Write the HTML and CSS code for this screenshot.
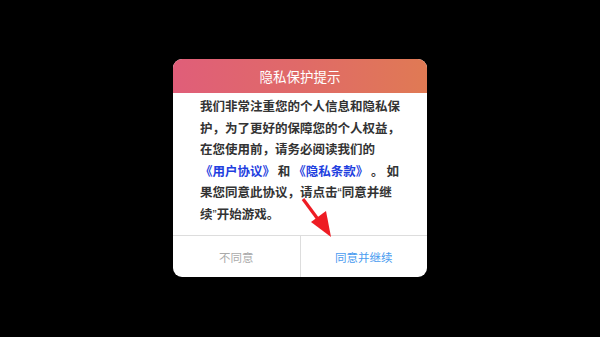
FILE: index.html
```html
<!DOCTYPE html>
<html lang="zh">
<head>
<meta charset="utf-8">
<link rel="stylesheet" href="styles.css">
</head>
<body>
<div class="stage">
  <div class="dialog">
    <div class="header">隐私保护提示</div>
    <div class="content">
      <p class="text">我们非常注重您的个人信息和隐私保<br>护，为了更好的保障您的个人权益，<br>在您使用前，请务必阅读我们的<br><span class="link">《用户协议》</span> 和 <span class="link">《隐私条款》</span> 。 如<br>果您同意此协议，请点击<span class="q">“</span>同意并继<br>续<span class="q">”</span>开始游戏。</p>
    </div>
    <div class="actions">
      <div class="btn btn-no">不同意</div>
      <div class="btn btn-yes">同意并继续</div>
    </div>
  </div>
  <svg class="arrow" width="600" height="337" viewBox="0 0 600 337">
    <line x1="303" y1="199" x2="320" y2="222" stroke="#ee1c24" stroke-width="3.2"/>
    <polygon points="311,222 326,211 331,237" fill="#ee1c24"/>
  </svg>
</div>
</body>
</html>
```
FILE: styles.css
```css
html, body {
  margin: 0;
  padding: 0;
  background: #000;
}
.stage {
  position: relative;
  width: 600px;
  height: 337px;
  display: flex;
  justify-content: center;
  align-items: flex-start;
  font-family: "Noto Sans CJK SC", "Noto Sans", sans-serif;
}
.dialog {
  margin-top: 59px;
  width: 254px;
  background: #fff;
  border-radius: 9px;
  overflow: hidden;
  display: flex;
  flex-direction: column;
}
.header {
  height: 34px;
  background: linear-gradient(90deg, #e05e79 0%, #e06a68 50%, #e07a54 100%);
  color: #fff;
  font-size: 13.5px;
  display: flex;
  align-items: center;
  justify-content: center;
}
.content {
  padding: 2px 0 11px 27px;
}
.text {
  margin: 0;
  font-size: 12.5px;
  line-height: 21.5px;
  font-weight: 700;
  color: #333;
  white-space: nowrap;
}
.q {
  font-family: "Liberation Sans", sans-serif;
  font-weight: 400;
  line-height: 0;
}
.link {
  color: #1f3fe0;
}
.actions {
  display: flex;
  border-top: 1px solid #ddd;
  height: 41px;
}
.btn {
  flex: 1;
  display: flex;
  align-items: center;
  justify-content: center;
  font-size: 11.5px;
}
.btn-no {
  color: #aaa;
  border-right: 1px solid #ddd;
}
.btn-yes {
  color: #4a9cf0;
}
.arrow {
  position: absolute;
  left: 0;
  top: 0;
}
```
